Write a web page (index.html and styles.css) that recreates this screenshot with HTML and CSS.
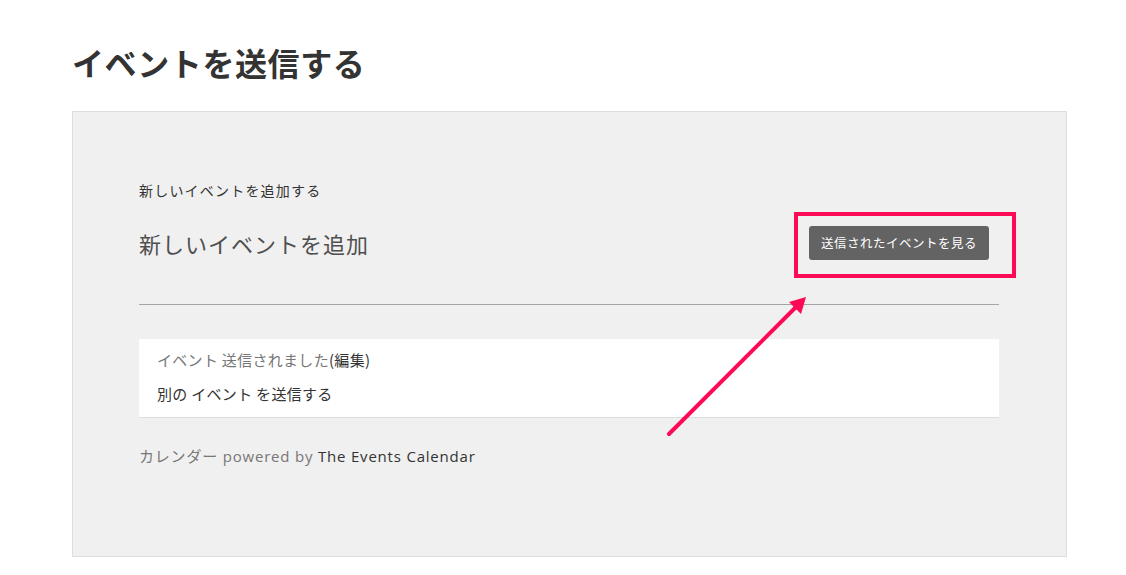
FILE: index.html
```html
<!DOCTYPE html>
<html lang="ja">
<head>
<meta charset="utf-8">
<title>イベントを送信する</title>
<link rel="stylesheet" href="styles.css">
</head>
<body>
<main class="page">
  <h1 class="page-title">イベントを送信する</h1>
  <section class="panel">
    <p class="panel-kicker">新しいイベントを追加する</p>
    <div class="panel-head">
      <h2 class="panel-title">新しいイベントを追加</h2>
      <div class="btn-wrap">
        <a class="btn" href="#">送信されたイベントを見る</a>
      </div>
    </div>
    <hr class="divider">
    <div class="notice">
      <p class="notice-line muted">イベント 送信されました<a class="notice-link" href="#">(編集)</a></p>
      <p class="notice-line"><a class="notice-link" href="#">別の イベント を送信する</a></p>
    </div>
    <p class="credit"><span class="muted">カレンダー powered by</span> <a class="credit-link" href="#">The Events Calendar</a></p>
    <svg class="arrow" width="150" height="150" viewBox="0 0 150 150" aria-hidden="true">
      <line x1="6" y1="142" x2="133" y2="15" stroke="#fc0a55" stroke-width="4" stroke-linecap="round"/>
      <polygon points="143,5 138,22 126,10" fill="#fc0a55"/>
    </svg>
  </section>
</main>
</body>
</html>
```

FILE: styles.css
```css
html, body {
  margin: 0;
  padding: 0;
  background: #ffffff;
}

body {
  font-family: "Noto Sans CJK JP", "Noto Sans", sans-serif;
  color: #333333;
}

.page {
  padding: 43px 59px 0 72px;
}

.page-title {
  margin: 0 0 30px;
  font-size: 32px;
  line-height: 38px;
  font-weight: 700;
  color: #333333;
  letter-spacing: 0.6px;
}

.panel {
  position: relative;
  background: #f0f0f0;
  border: 1px solid #dddddd;
  padding: 68px 67px 88px 66px;
}

.panel-kicker {
  margin: 0;
  font-size: 14px;
  line-height: 20px;
  color: #333333;
  letter-spacing: 1.2px;
}

.panel-head {
  display: flex;
  align-items: center;
  justify-content: space-between;
  margin-top: 26px;
}

.panel-title {
  margin: 0;
  font-size: 22px;
  line-height: 34px;
  font-weight: 400;
  color: #4f4f4f;
  letter-spacing: 1px;
}

.btn-wrap {
  position: relative;
  margin-right: 10px;
}

.btn-wrap::after {
  content: "";
  position: absolute;
  left: -15px;
  right: -27px;
  top: -14px;
  bottom: -18px;
  border: 4px solid #fc0a55;
}

.btn {
  display: block;
  width: 180px;
  box-sizing: border-box;
  height: 34px;
  line-height: 34px;
  text-align: center;
  background: #636363;
  color: #ffffff;
  font-size: 12.5px;
  border-radius: 3px;
  text-decoration: none;
  letter-spacing: 0.5px;
}

.divider {
  margin: 44px 0 0;
  border: 0;
  border-top: 1px solid #a4a4a4;
  height: 0;
}

.notice {
  margin-top: 34px;
  background: #ffffff;
  border-bottom: 1px solid #dcdcdc;
  padding: 4px 18px 6px;
}

.notice-line {
  margin: 0;
  font-size: 15px;
  line-height: 34px;
  color: #333333;
  letter-spacing: 0.3px;
}

.notice-line.muted {
  color: #777777;
}

.notice-link {
  color: #333333;
  text-decoration: none;
}

.credit {
  margin: 26px 0 0;
  font-family: "Open Sans", "Noto Sans CJK JP", sans-serif;
  font-size: 15px;
  line-height: 24px;
  letter-spacing: 0.8px;
}

.muted {
  color: #777777;
}

.credit-link {
  color: #333333;
  text-decoration: none;
}

.arrow {
  position: absolute;
  left: 590px;
  top: 180px;
}
```
